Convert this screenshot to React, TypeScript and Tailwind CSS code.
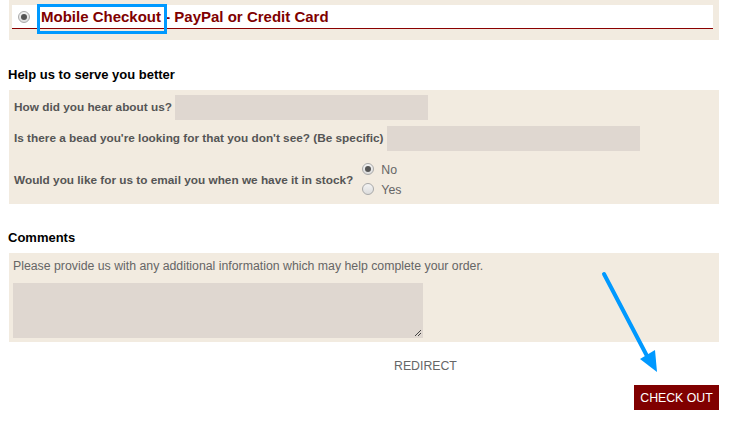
import React from "react";

function Radio({ checked }: { checked?: boolean }) {
    return (
        <span className="inline-flex h-[12px] w-[12px] shrink-0 items-center justify-center rounded-full border border-[#a9a9a9] bg-gradient-to-b from-[#f4f4f4] to-[#dcdcdc]">
            {checked && <span className="h-[6px] w-[6px] rounded-full bg-[#555]" />}
        </span>
    );
}

export default function App() {
    return (
        <div className="relative h-[424px] w-[745px] bg-white font-['Liberation_Sans',Arial,sans-serif] text-[13px]">
            {/* -----PAYMENT OPTION----- */}
            <div className="ml-[9px] w-[710px] bg-[#f2ebe0] pt-[5px] pb-[11px] pl-[3px] pr-[6px]">
                <div className="flex h-[24px] items-center border-b border-[#8b0000] bg-white pl-[6px]">
                    <Radio checked />
                    <span className="ml-[11px] mt-[2px] text-[15px] font-bold text-[#800000]">Mobile Checkout - PayPal or Credit Card</span>
                </div>
            </div>

            {/* -----HELP US----- */}
            <h3 className="mt-[27px] ml-[8px] text-[13px] font-bold leading-[16px] text-black">Help us to serve you better</h3>
            <div className="mt-[7px] ml-[9px] flex h-[114px] w-[710px] flex-col bg-[#f2ebe0] pt-[5px] pl-[5px] text-[11.8px] font-bold text-[#555]">
                <div className="flex h-[25px] items-center gap-[3px]">
                    <span>How did you hear about us?</span>
                    <div className="h-[25px] w-[253px] bg-[#dfd7d0]" />
                </div>
                <div className="mt-[6px] flex h-[25px] items-center gap-[4px]">
                    <span>Is there a bead you're looking for that you don't see? (Be specific)</span>
                    <div className="h-[25px] w-[253px] bg-[#dfd7d0]" />
                </div>
                <div className="mt-[8px] flex items-center gap-[9px]">
                    <span className="mt-[4px]">Would you like for us to email you when we have it in stock?</span>
                    <div className="flex flex-col text-[12.3px] font-normal text-[#666]">
                        <label className="flex h-[20px] items-center gap-[7px]">
                            <Radio checked />
                            <span className="mt-[3px]">No</span>
                        </label>
                        <label className="flex h-[20px] items-center gap-[7px]">
                            <Radio />
                            <span className="mt-[3px]">Yes</span>
                        </label>
                    </div>
                </div>
            </div>

            {/* -----COMMENTS----- */}
            <h3 className="mt-[26px] ml-[8px] text-[13px] font-bold leading-[16px] text-black">Comments</h3>
            <div className="mt-[7px] ml-[9px] h-[89px] w-[710px] bg-[#f2ebe0] pt-[5px] pl-[4px] text-[12.3px] text-[#666]">
                <p className="leading-[16px]">Please provide us with any additional information which may help complete your order.</p>
                <div className="relative mt-[9px] h-[55px] w-[410px] bg-[#dfd7d0]">
                    <svg className="absolute right-[1px] bottom-[1px]" width="8" height="8" viewBox="0 0 8 8">
                        <path d="M7 1 L1 7 M7 4 L4 7" stroke="#444" strokeWidth="1" />
                    </svg>
                </div>
            </div>

            {/* -----ACTIONS----- */}
            <div className="mt-[15px] pl-[394px] text-[12.3px] text-[#666]">
                <span className="leading-[16px]">REDIRECT</span>
            </div>
            <div className="mt-[10px] flex w-[719px] justify-end">
                <button className="h-[25px] w-[85px] bg-[#800000] text-[12.3px] text-white">CHECK OUT</button>
            </div>

            {/* -----ANNOTATIONS----- */}
            <div className="absolute top-[4px] left-[37px] h-[30px] w-[130px] border-[3px] border-[#0099ff]" />
            <svg className="absolute top-0 left-0" width="745" height="424">
                <line x1="604" y1="274" x2="647" y2="356" stroke="#0099ff" strokeWidth="4" strokeLinecap="round" />
                <polygon points="640,359 655,350 657,372" fill="#0099ff" />
            </svg>
        </div>
    );
}
